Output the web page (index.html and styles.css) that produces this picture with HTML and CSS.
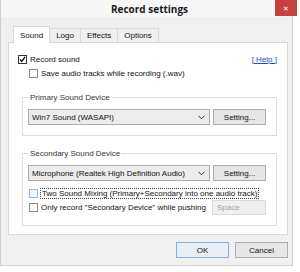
FILE: index.html
```html
<!DOCTYPE html>
<html lang="en">
<head>
    <meta charset="UTF-8">
    <title>Record settings</title>
    <link rel="stylesheet" href="styles.css">
</head>
<body>
    <div class="window">
        <div class="titlebar">
            <span class="title">Record settings</span>
            <span class="close">&#x2715;</span>
        </div>
        <div class="client">
            <div class="tabs">
                <span class="tab active">Sound</span>
                <span class="tab">Logo</span>
                <span class="tab">Effects</span>
                <span class="tab">Options</span>
            </div>
            <div class="panel">
                <div class="row top-row">
                    <label class="check"><span class="box checked"><svg width="9" height="9" viewBox="0 0 9 9"><path d="M1.2 4.4 L3.5 7 L7.8 1.2" fill="none" stroke="#111" stroke-width="1.7"/></svg></span>Record sound</label>
                    <a class="help" href="#">[ Help ]</a>
                </div>
                <div class="row sub-row">
                    <label class="check"><span class="box"></span>Save audio tracks while recording (.wav)</label>
                </div>

                <fieldset class="group primary">
                    <legend>Primary Sound Device</legend>
                    <div class="device-row">
                        <div class="combo"><span class="combo-text">Win7 Sound (WASAPI)</span><span class="chev"><svg width="7" height="5" viewBox="0 0 7 5"><path d="M0.5 0.8 L3.5 3.8 L6.5 0.8" fill="none" stroke="#333" stroke-width="1"/></svg></span></div>
                        <button class="btn">Setting...</button>
                    </div>
                </fieldset>

                <fieldset class="group secondary">
                    <legend>Secondary Sound Device</legend>
                    <div class="device-row">
                        <div class="combo"><span class="combo-text">Microphone (Realtek High Definition Audio)</span><span class="chev"><svg width="7" height="5" viewBox="0 0 7 5"><path d="M0.5 0.8 L3.5 3.8 L6.5 0.8" fill="none" stroke="#333" stroke-width="1"/></svg></span></div>
                        <button class="btn">Setting...</button>
                    </div>
                    <label class="check mix"><span class="box hover"></span><span class="focus">Two Sound Mixing (Primary+Secondary into one audio track)</span></label>
                    <div class="push-row">
                        <label class="check"><span class="box"></span>Only record "Secondary Device" while pushing</label>
                        <span class="keybox">Space</span>
                    </div>
                </fieldset>
            </div>
            <div class="actions">
                <button class="btn ok">OK</button>
                <button class="btn">Cancel</button>
            </div>
        </div>
    </div>
</body>
</html>
```

FILE: styles.css
```css
body {
    margin: 0;
    background-color: #fff;
    font-family: "Liberation Sans", Arial, sans-serif;
    font-size: 8px;
    line-height: 9px;
    color: #111;
}
.window {
    position: relative;
    width: 293px;
    height: 266px;
    background-color: #f0f0f0;
    border: 1px solid #d0d0d0;
    border-top: none;
    box-sizing: border-box;
}
.titlebar {
    height: 17px;
    display: flex;
    justify-content: center;
    align-items: center;
    background-color: #f7f7f7;
}
.title {
    font-family: "Open Sans", sans-serif;
    font-weight: bold;
    font-size: 10px;
    line-height: 12px;
    color: #1a1a1a;
    margin-left: 6px;
}
.close {
    position: absolute;
    top: 0;
    right: -5px;
    width: 22px;
    height: 16px;
    background-color: #c9413f;
    color: #fff;
    font-size: 7px;
    display: flex;
    justify-content: center;
    align-items: center;
}
.client {
    padding: 0 4px 0 7px;
}
.tabs {
    display: flex;
    align-items: flex-end;
    height: 25px;
    padding-left: 5px;
}
.tab {
    height: 13px;
    padding: 0 6px;
    border: 1px solid #d9d9d9;
    border-bottom: none;
    background-color: #f0f0f0;
    display: flex;
    align-items: center;
    margin-left: -1px;
}
.tab.active {
    height: 16px;
    background-color: #fff;
    position: relative;
    z-index: 1;
    margin-bottom: -1px;
    margin-left: 0;
}
.panel {
    height: 193px;
    background-color: #fff;
    border: 1px solid #d9d9d9;
    box-sizing: border-box;
    padding: 9px 10px 0 9px;
}
.row {
    display: flex;
    align-items: center;
    justify-content: space-between;
}
.top-row {
    height: 14px;
}
.sub-row {
    padding-left: 11px;
    height: 15px;
}
.check {
    display: flex;
    align-items: center;
    white-space: nowrap;
}
.box {
    width: 9px;
    height: 9px;
    border: 1px solid #8a8a8a;
    background-color: #fff;
    margin-right: 3px;
    box-sizing: border-box;
    display: flex;
    justify-content: center;
    align-items: center;
    flex-shrink: 0;
}
.box.checked {
    border-color: #333;
}
.box.hover {
    border-color: #8fb8e0;
    background-color: #f2f7fc;
}
.help {
    color: #2a3fcf;
    text-decoration: underline;
}
.group {
    margin: 12px 0 0 4px;
    padding: 7px 10px 10px 5px;
    border: 1px solid #dcdcdc;
    min-width: 0;
}
.group legend {
    padding: 0 2px;
    margin-left: 0;
    color: #333;
}
.secondary {
    margin-top: 13px;
    padding-bottom: 10px;
}
.device-row {
    display: flex;
    gap: 3px;
}
.combo {
    width: 183px;
    height: 16px;
    box-sizing: border-box;
    border: 1px solid #acacac;
    background-color: #ececec;
    display: flex;
    align-items: center;
    padding-left: 3px;
    white-space: nowrap;
}
.combo-text {
    overflow: hidden;
}
.chev {
    margin-left: auto;
    margin-right: 4px;
    padding-left: 4px;
    display: flex;
}
.btn {
    font: inherit;
    color: #111;
    width: 53px;
    height: 16px;
    padding: 0;
    border: 1px solid #adadad;
    background-color: #e6e6e6;
}
.mix {
    margin-top: 8px;
    padding-left: 1px;
}
.focus {
    outline: 1px dotted #444;
    padding: 0 1px;
}
.push-row {
    display: flex;
    align-items: center;
    justify-content: space-between;
    margin-top: 2px;
    padding-left: 1px;
}
.keybox {
    width: 54px;
    height: 15px;
    box-sizing: border-box;
    border: 1px solid #dcdcdc;
    background-color: #f0f0f0;
    color: #a3a3a3;
    display: flex;
    align-items: center;
    padding-left: 4px;
}
.actions {
    display: flex;
    justify-content: flex-end;
    gap: 6px;
    margin-top: 7px;
}
.actions .btn {
    width: 53px;
    height: 16px;
}
.actions .ok {
    border-color: #7fb0e0;
    background-color: #e8eef4;
}
```
